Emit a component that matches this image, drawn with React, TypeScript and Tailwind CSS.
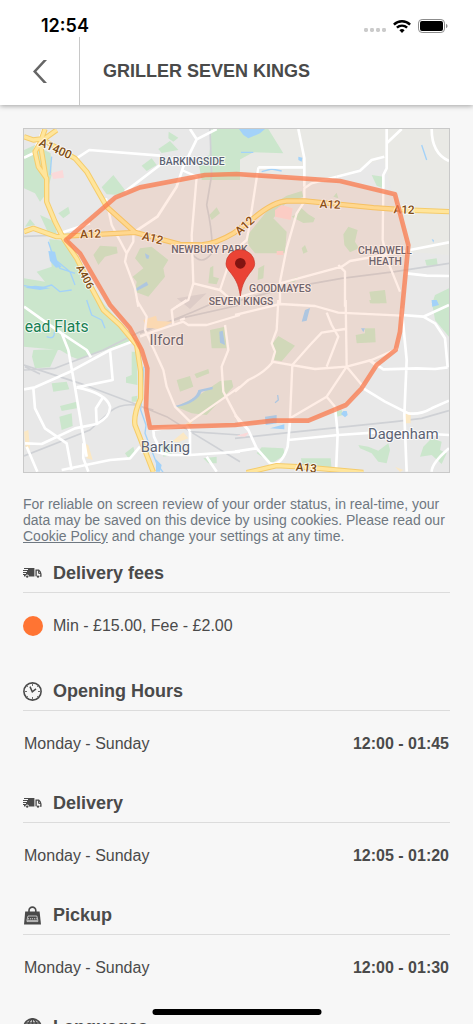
import type { ReactNode } from 'react';

type Tile = {
  x: number;
  y: number;
  parks: string[];
  water: string[];
  streams: string[];
  rail: string[];
  roads: string[];
  minor: string[];
};

// The map is split in four tiles, each one has its own origin
const tiles: Tile[] = [
  {
    x: 0,
    y: 0,
    parks: [
      'M575 12H660V165H545L535 110L568 90Z',
      'M446 20L475 38L460 50L445 40Z',
      'M415 72L450 48L475 75L425 84Z',
      'M365 122L395 100L410 120L380 138Z',
      'M245 187L280 150L315 195L300 210L260 208Z',
      'M12 75L45 60L92 85L95 150L80 205L60 230L45 205L12 190Z',
      'M60 270L105 290L112 342L85 325Z',
      'M15 305L30 282L45 300Z',
      'M115 265L145 245L150 265L130 280Z',
      'M88 342L135 348L180 420L262 555H12V460L75 470L50 440L95 425Z',
      'M220 390L240 362L290 365L293 385L255 395L235 420Z',
      'M345 400L360 370L395 365L445 405L430 430L435 455L385 515L345 500L350 470L338 455L370 430Z',
      'M568 270L590 247L600 265L575 285Z',
      'M570 428L580 422V455L597 460L590 478L565 475Z',
    ],
    water: [
      'M345 492L380 470L385 480L350 498Z',
      'M85 378L105 380L112 410L125 425L108 428L90 408Z',
      'M15 488Q45 475 90 490L60 495Z',
      'M375 385L388 392L385 402L378 400Z',
    ],
    streams: ['M85 350L95 380L120 430L165 445', 'M95 395L150 440L165 480', 'M12 482L60 490L95 480L120 500L155 495', 'M95 95L90 150'],
    rail: ['M12 334L125 330', 'M570 12L575 150L560 240Q580 330 575 385Q545 425 515 385'],
    roads: [
      'M12 98L40 85L70 12',
      'M165 103L208 75L420 92',
      'M510 12L530 43L590 12',
      'M530 43L490 125L470 185L412 275L345 320',
      'M315 200L420 120L480 100',
      'M120 325L210 295',
    ],
    minor: [
      'M258 220L275 300L320 385L340 350V320',
      'M320 385L315 410L345 490L355 545',
      'M485 135L530 155L515 330L520 475L600 495L640 530',
      'M520 475L505 525L470 545',
      'M600 495L625 420L655 400',
    ],
  },
  {
    x: 645,
    y: 0,
    parks: [
      'M0 12H100L145 85L55 82L0 112Z',
      'M38 330L70 290L110 240L155 212L200 198L205 215L150 238L115 280L155 320L150 385H60L40 360Z',
      'M325 328L340 305L368 315L360 350L372 370L345 382L328 360Z',
      'M170 275L190 265L195 245L220 268L240 280L235 292L205 294Z',
      'M200 370L210 360L218 380L205 386Z',
      'M403 500L450 495L455 535H410Z',
      'M410 150L445 155L440 188L425 182Z',
      'M570 405L605 400L608 420L575 422Z',
      'M145 472L190 455L180 470Z',
      'M70 430L88 420L85 460L68 465Z',
      'M590 540L600 510L642 490V560H600Z',
      'M295 215L305 203L310 220Z',
    ],
    water: ['M12 12H90L75 25L40 40L25 30Z', 'M190 95L202 98L200 110L190 105Z', 'M590 530L600 525L608 540H592Z', 'M590 342L597 345L595 353Z'],
    streams: ['M18 82H55', 'M80 140L110 132L140 138', 'M560 60L575 105'],
    rail: ['M642 415L480 440L320 460L150 490L0 530'],
    roads: [
      'M190 12L208 100V185',
      'M70 127H205',
      'M455 12V130L445 150V190',
      'M500 12L455 55',
      'M590 12Q590 85 642 108',
      'M448 95L410 105L375 137L305 155',
      'M525 375L642 352',
      'M515 445L575 452L642 453',
    ],
    minor: [
      'M70 127L40 320L35 345L0 375',
      'M305 155L230 175L208 190V230L185 265L155 370L135 470V540',
      'M135 480L0 520',
      'M135 475L320 425L345 408L520 377',
      'M445 190L443 345L455 400L495 500',
      'M310 420L330 440V545',
    ],
  },
  {
    x: 0,
    y: 525,
    parks: [
      'M12 0H240L335 105L330 125L175 178L155 170L120 150L12 140Z',
      'M40 150L115 147L90 202L45 205L36 170Z',
      'M95 250L140 245L148 268L100 275Z',
      'M120 318L170 305V325L125 333Z',
      'M118 350L155 340L158 378L125 390Z',
      'M335 155H352V255L318 248V232L335 225Z',
      'M315 460L340 440L345 460L325 475Z',
      'M335 290L352 287V305H335Z',
      'M425 435L455 430V465L430 470Z',
      'M570 90L615 80L620 145H575Z',
      'M470 240L510 228L520 260L480 275Z',
      'M523 222L565 207L568 220L530 235Z',
      'M468 320L530 290L600 243L635 240L640 260L560 345L515 340Z',
      'M550 475L590 470V490H565Z',
    ],
    water: ['M598 95L608 92L615 135L600 128Z', 'M465 318Q530 300 535 270L578 260V268L545 275Q530 310 470 321Z', 'M408 478L425 495L420 515H408Z'],
    streams: ['M200 0L215 45L245 60L255 85', 'M80 110Q105 120 103 95', 'M372 200L362 330L378 375L375 400L410 490L430 518'],
    rail: [
      'M12 195L180 250L340 310L440 350L520 400L660 485',
      'M12 210L105 205L250 150L360 95L480 55L660 15',
      'M12 468L210 390L270 335Q300 310 345 315',
      'M15 200L60 222M345 315L400 330M510 395L660 405',
      'M360 100L520 35L600 0',
    ],
    roads: [
      'M12 20L75 65L125 100L200 150L213 172',
      'M125 100L145 150L165 262L200 470',
      'M12 268L45 262L150 215L270 150L335 125',
      'M270 150L278 240L170 262',
      'M40 265L45 325L75 385L140 430L155 510',
      'M170 262Q260 280 270 320Q272 350 230 372L165 385L65 432L15 430',
      'M250 290L228 325L230 372',
      'M125 510L270 480L330 475L360 440',
      'M190 430V475L205 515M20 440L52 515',
      'M400 390L402 410L425 460L390 450M425 460L450 465L510 465L660 455',
      'M400 390L500 375M500 375L510 395M510 395L510 465',
      'M560 470L590 515',
    ],
    minor: [
      'M350 0L380 50L375 90L430 210L440 260L465 320L510 365L660 260',
      'M360 110L400 95L460 75L490 65L505 75L560 75L660 45',
      'M460 75L455 30L500 0',
      'M615 75L625 150L605 200L610 275L660 370',
      'M480 60L495 55',
    ],
  },
  {
    x: 645,
    y: 525,
    parks: [
      'M118 180L113 130L130 108L180 137L140 184Z',
      'M362 105L390 100V85H420L422 127L365 130Z',
      'M65 460L80 442L145 445L150 465L110 490Z',
      'M198 475H287L290 510H240L200 490Z',
      'M370 435L400 440L430 452L460 430L465 450L455 490L430 485L410 460L375 445Z',
      'M555 470L565 440L590 415L620 425L615 450L635 460L620 492L590 465Z',
      'M590 0H642V110L600 60Z',
      'M300 335L320 330L325 345L305 350Z',
      'M403 0H435V10H405Z',
    ],
    water: [
      'M210 30L225 24L215 62L200 65Z',
      'M90 350L125 345V370L92 375Z',
      'M105 385L148 373V388Z',
      'M318 342L325 333H335L338 345L330 352Z',
      'M590 0H605L612 15L592 20Z',
      'M378 85H390L385 97Z',
    ],
    streams: ['M128 285L130 300L120 308'],
    rail: ['M0 415L160 398L480 365L560 355L642 332'],
    roads: [
      'M500 25L515 180L508 345L515 515',
      'M500 45L565 50L600 70L630 115L638 202',
      'M565 50L642 15',
      'M410 185L445 208L545 205L600 207L638 202',
      'M385 265L450 305L520 340Q555 345 590 325L642 302',
      'M160 420L310 405L460 395L642 405',
      'M0 345L40 390L65 445L0 455M65 445L105 490Q140 500 158 440L165 365',
      'M300 320L308 400L303 515',
      'M590 515Q590 490 642 445',
    ],
    minor: [
      'M130 0L125 90L110 130L120 155L110 190Q85 220 40 240L0 275',
      'M0 45L135 12L240 18L310 38L500 47',
      'M275 38L290 75L310 110L275 200',
      'M332 0L335 200L275 290L165 355L172 195',
      'M172 195L225 135L260 98L330 87',
      'M110 185L240 207L335 200L410 180L490 145',
      'M335 200L385 260M275 290L300 320',
      'M400 180L430 200',
    ],
  },
];

const mainRoads = [
  'M12 35L40 45L75 40L110 15',
  'M75 12L60 55L45 80L55 125L80 160L80 230L105 290L130 340L170 400L210 480L250 555L300 600L350 660L362 740V820Q340 870 345 900L400 1041',
  'M60 50L78 160',
  'M70 45L165 100L200 140L260 245L345 322',
  'M12 320L40 310L110 335L345 322L480 358L545 360Q590 355 640 325L700 280Q760 230 800 228H855L960 238L1060 248L1160 255L1287 260',
];

const southRoad = 'M680 1043L770 1022L850 1026L1030 1042';

const zone =
  'M138 345L285 218L360 187L555 150L650 147L960 168L1125 208L1165 360L1152 495L1140 620L1127 675L1070 720L1025 790L978 840L865 887L760 887L645 900L390 908L378 850L382 730L365 675L330 610L270 540L180 385Z';

function Label({ x, y, size, color = '#5b6273', rotate = 0, weight = 500, children }: {
  x: number;
  y: number;
  size: number;
  color?: string;
  rotate?: number;
  weight?: number;
  children: ReactNode;
}) {
  return (
    <text
      x={x}
      y={y}
      fontSize={size}
      fontWeight={weight}
      fill={color}
      stroke="#ffffff"
      strokeOpacity="0.75"
      strokeWidth="6"
      strokeLinejoin="round"
      paintOrder="stroke"
      textAnchor="middle"
      transform={`rotate(${rotate} ${x} ${y})`}
    >
      {children}
    </text>
  );
}

function DeliveryMap() {
  return (
    <svg
      viewBox="12 12 1275 1029"
      className="block w-full font-['Roboto',sans-serif]"
      role="img"
      aria-label="Delivery area"
      fill="none"
      strokeLinejoin="round"
    >
      <rect x="12" y="12" width="1275" height="1029" fill="#e8e8e8" />
      <path d="M645 12H1287V390L1160 380L1090 100L1020 130L930 165H645Z" fill="#e9e9e5" />
      {/* Parks and water */}
      {tiles.map((t) => (
        <g key={`${t.x}-${t.y}`} transform={`translate(${t.x} ${t.y})`}>
          <path d={t.parks.join('')} fill="#cbe6cc" />
          <path d={t.water.join('')} fill="#a3d2f9" />
          <path d={t.streams.join('')} stroke="#a3d2f9" strokeWidth="4" />
          <path d={t.rail.join('')} stroke="#cfd1d5" strokeWidth="5" />
        </g>
      ))}
      <path d="M93 145L128 135L132 158L100 162ZM765 255L785 240L818 250L812 285L765 275ZM770 378H790V390H770ZM650 932L690 920L675 935Z" fill="#fbd9d9" />
      <path
        d="M370 585L408 572L412 588L458 590L420 612L380 608ZM12 920L25 915L30 970L18 975ZM190 955L205 960L218 1005L200 1000ZM455 950L490 922L505 940L475 952ZM490 900L520 885L505 910ZM1150 870L1172 860V895H1155ZM1125 1025L1150 1035L1140 1041Z"
        fill="#fbe8c4"
      />
      <path d="M470 520L560 505L510 552Z" fill="#d9d9dc" />
      {/* Roads */}
      {tiles.map((t) => (
        <g key={`${t.x}-${t.y}`} transform={`translate(${t.x} ${t.y})`} stroke="#ffffff">
          <path d={t.minor.join('')} strokeWidth="7" />
          <path d={t.roads.join('')} strokeWidth="8" />
        </g>
      ))}
      <path d={mainRoads.join('')} stroke="#f5cc6b" strokeWidth="16" />
      <path d={mainRoads.join('')} stroke="#ffe59b" strokeWidth="10" />
      <path d={southRoad} stroke="#f5cc6b" strokeWidth="16" />
      <path d={southRoad} stroke="#ffe59b" strokeWidth="10" />

      <Label x={102} y={82} size={35} color="#7b4a12" rotate={24}>A1400</Label>
      <Label x={212} y={339} size={35} color="#7b4a12" rotate={-2}>A12</Label>
      <Label x={395} y={351} size={35} color="#7b4a12" rotate={14}>A12</Label>
      <Label x={682} y={311} size={35} color="#7b4a12" rotate={-42}>A12</Label>
      <Label x={930} y={250} size={35} color="#7b4a12" rotate={3}>A12</Label>
      <Label x={1152} y={266} size={35} color="#7b4a12" rotate={2}>A12</Label>
      <Label x={186} y={461} size={32} color="#7b4a12" rotate={62}>A406</Label>
      <Label x={858} y={1040} size={35} color="#7b4a12" rotate={6}>A13</Label>
      <Label x={516} y={120} size={31}>BARKINGSIDE</Label>
      <Label x={568} y={384} size={31}>NEWBURY PARK</Label>
      <Label x={1095} y={388} size={31}>CHADWELL</Label>
      <Label x={1096} y={419} size={31}>HEATH</Label>
      <Label x={780} y={500} size={31}>GOODMAYES</Label>
      <Label x={663} y={541} size={31}>SEVEN KINGS</Label>
      <Label x={110} y={621} size={47} color="#188052" weight={400}>ead Flats</Label>
      <Label x={440} y={660} size={44} weight={400}>Ilford</Label>
      <Label x={436} y={981} size={44} weight={400}>Barking</Label>
      <Label x={1150} y={943} size={44} weight={400}>Dagenham</Label>

      {/* Delivery zone */}
      <path d={zone} fill="#ff7433" fillOpacity="0.12" stroke="#fa7a4c" strokeOpacity="0.75" strokeWidth="14" />
      {/* Pin */}
      <path
        d="M661 513C655 473 645 462 634 446C624 433 618 427 618 416A43 42 0 0 1 704 416C704 427 698 433 688 446C677 462 667 473 661 513Z"
        fill="#ea4335"
        stroke="#c5392d"
        strokeWidth="2"
      />
      <circle cx="661" cy="415" r="16" fill="#811411" />
    </svg>
  );
}

function TruckIcon() {
  return (
    <svg viewBox="0 0 19 10" className="w-[19px]" fill="currentColor" aria-hidden="true">
      <path d="M1 0H11.4V8.4H6A1.8 1.8 0 0 0 2.4 8.4H1V7H0V6H3V5H0V4H4V3H0V2H5V1H1Z" />
      <circle cx="4.2" cy="8.6" r="1.2" />
      <path d="M13.1 8.2V2.2H15.8Q17.6 3.6 17.9 6V8.2H16.8" fill="none" stroke="currentColor" strokeWidth="1.3" />
      <path d="M15.6 2.2V5.4H17.8" fill="none" stroke="currentColor" />
      <circle cx="15" cy="8.6" r="1.2" />
    </svg>
  );
}

function ClockIcon() {
  return (
    <svg viewBox="0 0 19 19" className="w-[19px]" fill="none" stroke="currentColor" aria-hidden="true">
      <circle cx="9.5" cy="9.5" r="8.6" strokeWidth="1.6" />
      <path d="M7 4.6L9.3 9.8L13 6.8" strokeWidth="1.5" />
      <path d="M9.5 2.2V3.8M9.5 15.2V16.8M2.2 9.5H3.8M15.2 9.5H16.8M4.3 4.3L5 5M14.7 4.3L14 5M4.3 14.7L5 14M14.7 14.7L14 14" />
    </svg>
  );
}

function BagIcon() {
  return (
    <svg viewBox="0 0 19 19" className="w-[19px]" fill="none" aria-hidden="true">
      <path d="M6 6V4.5A3.4 3.4 0 0 1 12.8 4.5V6" stroke="currentColor" strokeWidth="1.6" />
      <path d="M2.2 5.5H16.6L18 18.6H1Z" fill="currentColor" />
      <path
        d="M5 10H13.8L14.8 14V15.6H4V14ZM5.6 12V13.4M7.6 12V13.4M9.4 12V13.4M11.4 12V13.4M13.2 12V13.4M4.4 14.4H14.4"
        stroke="#f7f7f7"
        strokeOpacity="0.75"
        strokeWidth="0.9"
      />
    </svg>
  );
}

function GlobeIcon() {
  return (
    <svg viewBox="0 0 19 19" className="w-[19px]" fill="none" stroke="currentColor" strokeWidth="1.6" aria-hidden="true">
      <circle cx="9.5" cy="9.5" r="8.6" />
      <ellipse cx="9.5" cy="9.5" rx="4.2" ry="8.6" />
      <path d="M9.5 1V18M1 9.5H18M2.4 5H16.6M2.4 14H16.6" />
    </svg>
  );
}

function Section({ icon, title, children }: { icon: ReactNode; title: string; children?: ReactNode }) {
  return (
    <section>
      <div className="flex border-b border-[#dcdcdc] pb-[7px]">
        <span className="flex h-6 w-[30px] items-center">{icon}</span>
        <h2 className="text-lg leading-6 font-bold">{title}</h2>
      </div>
      {children}
    </section>
  );
}

function Hours({ days, time }: { days: string; time: string }) {
  return (
    <div className="mt-[21px] mb-[35px] flex justify-between px-px text-base leading-6">
      <span>{days}</span>
      <span className="font-bold">{time}</span>
    </div>
  );
}

function StatusBar() {
  return (
    <div className="flex h-[37px] items-center justify-between pt-[15px] pr-[25px] pl-[41px] text-black">
      <span className="font-['Inter',sans-serif] text-lg leading-5 font-semibold">12:54</span>
      <div className="flex items-center gap-[7px]">
        <svg viewBox="0 0 22 4" className="mt-2 w-[22px]" fill="#cbcbcb" aria-hidden="true">
          <rect x="0" width="4" height="4" rx="1.4" />
          <rect x="6" width="4" height="4" rx="1.4" />
          <rect x="12" width="4" height="4" rx="1.4" />
          <rect x="18" width="4" height="4" rx="1.4" />
        </svg>
        <svg viewBox="0 0 18 13" className="w-[18px]" fill="none" stroke="#000000" strokeWidth="2.4" aria-hidden="true">
          <path d="M0.9 4.6A11.6 11.6 0 0 1 17.1 4.6" />
          <path d="M3.9 7.7A7.3 7.3 0 0 1 14.1 7.7" />
          <path d="M9 13L6.4 10.3A3.7 3.7 0 0 1 11.6 10.3Z" fill="#000000" stroke="none" />
        </svg>
        <svg viewBox="0 0 30 14" className="w-[30px]" aria-hidden="true">
          <rect x="0.5" y="0.5" width="26" height="13" rx="3.6" fill="none" stroke="#8c8c8c" />
          <rect x="2" y="2" width="23" height="10" rx="2" fill="#000000" />
          <path d="M28 4.8Q29.6 5.6 29.6 7T28 9.2Z" fill="#8c8c8c" />
        </svg>
      </div>
    </div>
  );
}

export default function App() {
  return (
    <div className="relative flex h-screen flex-col overflow-hidden bg-[#f7f7f7] font-['Liberation_Sans',Arial,sans-serif] text-[#4a4a4a]">
      <header className="relative z-10 bg-white shadow-[0_1px_5px_rgba(0,0,0,0.35)]">
        <StatusBar />
        <div className="flex h-[68px]">
          <button type="button" aria-label="Back" className="flex w-20 items-center justify-center border-r border-[#c8c8c8]">
            <svg viewBox="0 0 14 23" className="w-[14px]" fill="#666666" aria-hidden="true">
              <path d="M10.6 0H14L3.4 11.5L14 23H10.6L0 11.5Z" />
            </svg>
          </button>
          <h1 className="flex items-center pl-[23px] text-lg font-bold">GRILLER SEVEN KINGS</h1>
        </div>
      </header>

      <main className="flex-1 overflow-y-auto px-[23px] pt-[23px] [scrollbar-width:none]">
        <div className="border border-[#c9c9c9]">
          <DeliveryMap />
        </div>

        <p className="mt-[23px] mb-[17px] text-sm leading-4 text-[#6f7881]">
          For reliable on screen review of your order status, in real-time, your data may be saved on this device by
          using cookies. Please read our{' '}
          <a href="#cookies" className="underline">
            Cookie Policy
          </a>{' '}
          and change your settings at any time.
        </p>

        <Section icon={<TruckIcon />} title="Delivery fees">
          <div className="mt-[21px] mb-[41px] flex items-center text-base leading-6">
            <span className="mr-[10px] h-5 w-5 rounded-full bg-[#ff7433]" />
            Min - £15.00, Fee - £2.00
          </div>
        </Section>
        <Section icon={<ClockIcon />} title="Opening Hours">
          <Hours days="Monday - Sunday" time="12:00 - 01:45" />
        </Section>
        <Section icon={<TruckIcon />} title="Delivery">
          <Hours days="Monday - Sunday" time="12:05 - 01:20" />
        </Section>
        <Section icon={<BagIcon />} title="Pickup">
          <Hours days="Monday - Sunday" time="12:00 - 01:30" />
        </Section>
        <Section icon={<GlobeIcon />} title="Languages" />
      </main>

      {/* Home indicator */}
      <div className="absolute bottom-[9px] left-1/2 z-10 h-[6px] w-[169px] -translate-x-1/2 rounded-full bg-black" />
    </div>
  );
}
